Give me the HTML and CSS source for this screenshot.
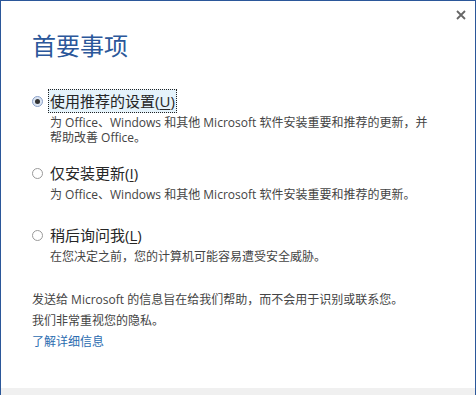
FILE: index.html
```html
<!DOCTYPE html>
<html lang="zh-CN">
<head>
    <meta charset="UTF-8">
    <title>首要事项</title>
    <link rel="stylesheet" href="styles.css">
</head>
<body>

<div class="dialog">
    <div class="topbar">
        <span class="close">
            <svg width="10" height="10" viewBox="0 0 10 10">
                <path d="M1 1 L9 9 M9 1 L1 9" stroke="#666" stroke-width="1.8" fill="none"/>
            </svg>
        </span>
    </div>

    <div class="content">
        <h1 class="title">首要事项</h1>

        <div class="options">
            <div class="option">
                <span class="radio checked"></span>
                <div class="option-text">
                    <div class="label focused">使用推荐的设置(<u>U</u>)</div>
                    <div class="desc">为 Office、Windows 和其他 Microsoft 软件安装重要和推荐的更新，并<br>帮助改善 Office。</div>
                </div>
            </div>
            <div class="option">
                <span class="radio"></span>
                <div class="option-text">
                    <div class="label">仅安装更新(<u>I</u>)</div>
                    <div class="desc">为 Office、Windows 和其他 Microsoft 软件安装重要和推荐的更新。</div>
                </div>
            </div>
            <div class="option later">
                <span class="radio"></span>
                <div class="option-text">
                    <div class="label">稍后询问我(<u>L</u>)</div>
                    <div class="desc">在您决定之前，您的计算机可能容易遭受安全威胁。</div>
                </div>
            </div>
        </div>

        <div class="note">
            <p>发送给 Microsoft 的信息旨在给我们帮助，而不会用于识别或联系您。</p>
            <p>我们非常重视您的隐私。</p>
            <a href="#">了解详细信息</a>
        </div>
    </div>

    <div class="bottom"></div>
</div>

</body>
</html>
```

FILE: styles.css
```css
body {
    margin: 0;
    background: #fff;
    font-family: "Open Sans", "Noto Sans CJK SC", sans-serif;
    color: #444;
}

.dialog {
    width: 474px;
    height: 394px;
    border: 1px solid #2b579a;
    border-bottom: 0;
    display: flex;
    flex-direction: column;
}

.topbar {
    height: 29px;
    box-sizing: border-box;
    display: flex;
    justify-content: flex-end;
    align-items: flex-start;
    padding: 9px 9px 0 0;
}
.close {
    display: block;
    width: 10px;
    height: 10px;
    line-height: 0;
}

.content {
    flex: 1;
    padding-left: 31px;
}

.title {
    margin: 0;
    font-size: 24px;
    font-weight: normal;
    line-height: 32px;
    color: #2b579a;
}

.options {
    margin-top: 27px;
}
.option {
    display: flex;
    align-items: flex-start;
    margin-bottom: 16px;
}
.option.later {
    margin-top: 21px;
}

.radio {
    width: 9px;
    height: 9px;
    border: 1px solid #9a9a9a;
    border-radius: 50%;
    margin-top: 7px;
    margin-right: 5px;
    position: relative;
    flex-shrink: 0;
}
.radio.checked {
    border-color: #8aa0c8;
    background: #dde6f3;
}
.radio.checked::after {
    content: "";
    position: absolute;
    left: 2px;
    top: 2px;
    width: 5px;
    height: 5px;
    border-radius: 50%;
    background: #333;
}

.label {
    display: inline-block;
    font-size: 15px;
    line-height: 22px;
    color: #262626;
    padding: 0 1px;
    border: 1px dotted transparent;
}
.label.focused {
    border-color: #222;
    background: #e5f3fb;
}
.label u {
    text-decoration-thickness: 1px;
    text-underline-offset: 2px;
}

.desc {
    font-size: 12px;
    line-height: 15px;
    margin-top: 2px;
    padding-left: 2px;
    color: #444;
}

.note {
    margin-top: 25px;
    font-size: 12px;
    line-height: 21px;
}
.note p {
    margin: 0;
}
.note a {
    color: #2b6cb0;
    text-decoration: none;
}

.bottom {
    height: 7px;
    background: #f0f0f0;
}
```
